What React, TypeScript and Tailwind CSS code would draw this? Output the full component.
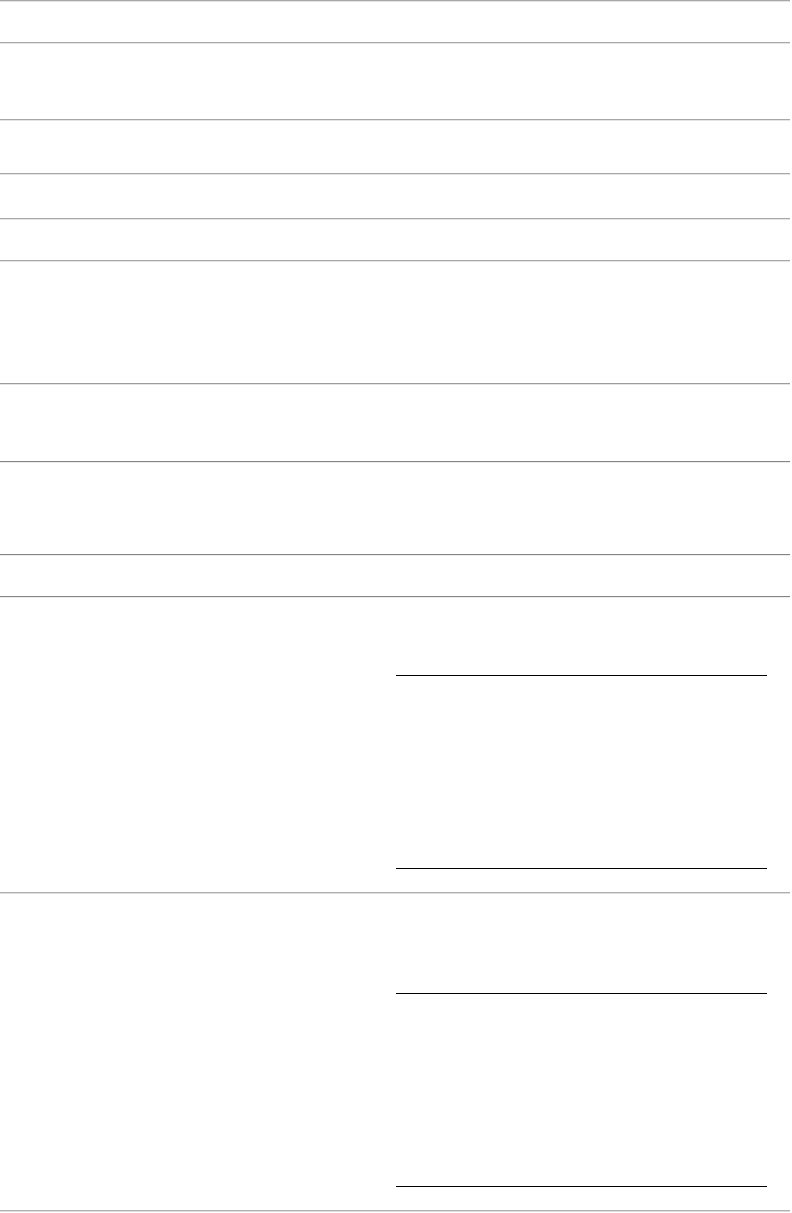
import React from "react";

const Sep = ({ tone }: { tone: string }) => (
  <div className={`h-[2px] w-full border-t ${tone}`} />
);

const light = "border-[#a8a8a8] bg-[#e4e4e4]";
const mid = "border-[#9c9c9c] bg-[#e4e4e4]";
const dark = "border-[#858585] bg-[#ececec]";
const pale = "border-[#b0b0b0] bg-[#dedede]";

const rows: { h: string; tone: string }[] = [
  { h: "h-[40px]", tone: light },
  { h: "h-[75px]", tone: light },
  { h: "h-[52px]", tone: light },
  { h: "h-[43px]", tone: light },
  { h: "h-[40px]", tone: light },
  { h: "h-[121px]", tone: light },
  { h: "h-[76px]", tone: mid },
  { h: "h-[91px]", tone: dark },
  { h: "h-[40px]", tone: dark },
];

const Panel = ({ top }: { top: string }) => (
  <div className="flex w-full">
    <div className="w-[396px]" />
    <div className={`flex-1 pr-[23px] ${top} pb-[23px]`}>
      <div className="h-[194px] border-y border-black" />
    </div>
  </div>
);

const App = () => {
  return (
    <div className="w-[790px] bg-white font-['Liberation_Sans',sans-serif]">
      {rows.map((r, idx) => (
        <div key={idx}>
          <Sep tone={r.tone} />
          <div className={r.h} />
        </div>
      ))}
      <Sep tone={dark} />
      <Panel top="pt-[77px]" />
      <Sep tone={pale} />
      <Panel top="pt-[99px]" />
      <Sep tone={pale} />
    </div>
  );
};

export default App;
